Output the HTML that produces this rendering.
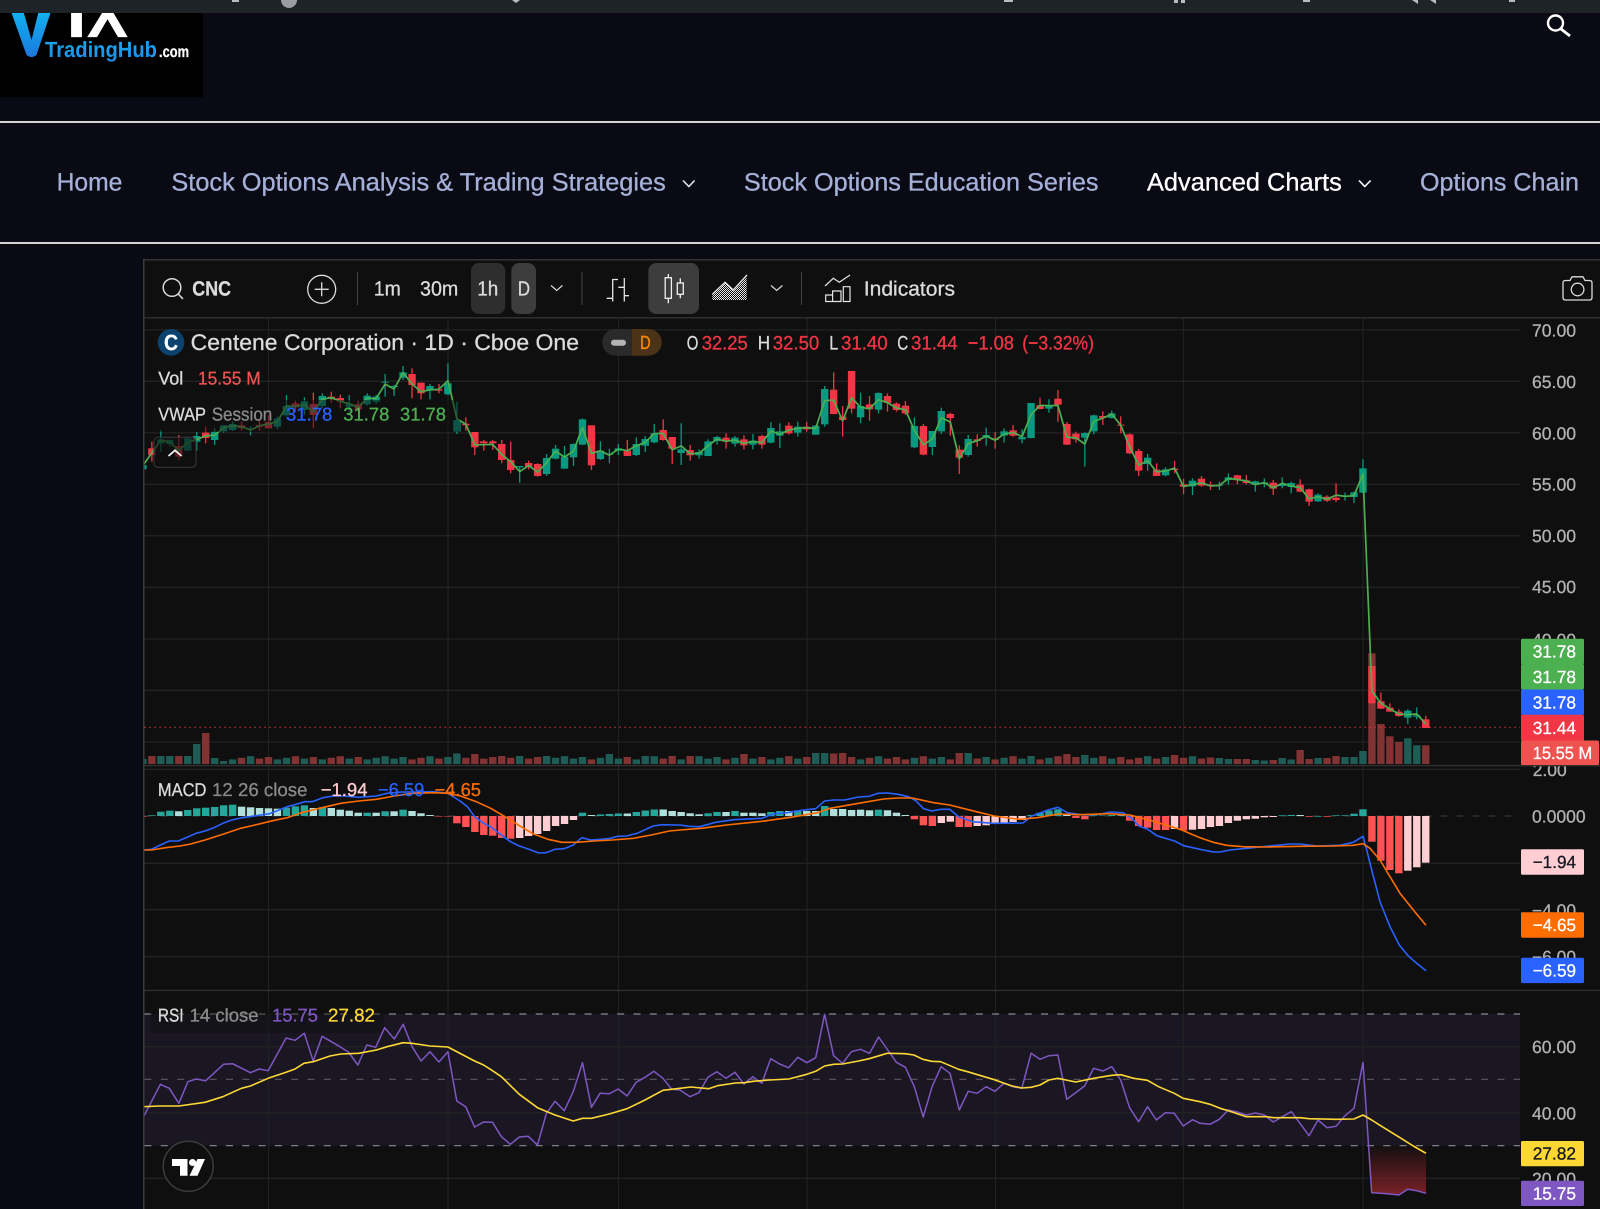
<!DOCTYPE html>
<html><head><meta charset="utf-8"><title>Advanced Charts</title>
<style>
html,body{margin:0;padding:0;background:#090a14;width:1600px;height:1209px;overflow:hidden}
svg{display:block;position:absolute;left:0;top:0;filter:blur(.3px)}
text{font-family:"Liberation Sans",sans-serif;text-rendering:geometricPrecision}
.n{font-size:25px;fill:#a5b0d8}
.t{font-size:20.500px;fill:#dbdbdb}
.a{font-size:17.500px;fill:#b2b2b2}
.l{font-size:17.500px;fill:#fff;font-weight:400}
.o{font-size:19.500px;fill:#f23645}
.w{font-size:19.500px;fill:#dbdbdb}
.v{font-size:18.500px}
</style></head><body>
<svg xmlns="http://www.w3.org/2000/svg" width="1600" height="1209" viewBox="0 0 1600 1209">
<defs>
<linearGradient id="vg" x1="0" y1="0" x2="0" y2="1"><stop offset="0" stop-color="#12b4f0"/><stop offset="1" stop-color="#1b78de"/></linearGradient>
<linearGradient id="tg" x1="0" y1="0" x2="0" y2="1"><stop offset="0" stop-color="#16aef0"/><stop offset="1" stop-color="#1e8ae6"/></linearGradient>
<linearGradient id="rf" x1="0" y1="0" x2="0" y2="1"><stop offset="0" stop-color="#7f2228" stop-opacity=".05"/><stop offset="1" stop-color="#7f2228" stop-opacity=".95"/></linearGradient>
<pattern id="dots" width="2" height="2" patternUnits="userSpaceOnUse"><rect width="1" height="1" fill="#e8e8e8"/><rect x="1" y="1" width="1" height="1" fill="#e8e8e8"/></pattern>
<clipPath id="logoclip"><rect x="0" y="13" width="203" height="84"/></clipPath>
<clipPath id="plotclip"><rect x="144.500" y="318" width="1455.500" height="891"/></clipPath>
</defs>

<rect width="1600" height="1209" fill="#090a14"/>
<!-- top bar -->
<rect width="1600" height="13" fill="#1e2327"/>
<g fill="#b9bdc0">
<rect x="232" y="0" width="7" height="2"/><circle cx="289" cy="0" r="8" fill="#9a9ea2"/><path d="M512 0h8l-4 3z"/>
<rect x="1004" y="0" width="9" height="2"/><rect x="1174" y="0" width="4" height="3"/><rect x="1181" y="0" width="4" height="3"/>
<rect x="1303" y="0" width="7" height="2"/><path d="M1412 0h6v4zM1430 0h6v4z"/><rect x="1509" y="0" width="6" height="2"/>
</g>

<!-- logo -->
<rect x="0" y="13" width="203" height="84" fill="#000"/>
<g clip-path="url(#logoclip)">
<path d="M10.500 10H23L31.500 40 39 10H51.500L36.500 55Q31.500 59 26.500 55Z" fill="url(#vg)"/>
<text x="66.500" y="37" font-size="66" font-weight="700" fill="#fff" textLength="20" lengthAdjust="spacingAndGlyphs">I</text>
<text x="87" y="37" font-size="66" font-weight="700" fill="#fff" textLength="41" lengthAdjust="spacingAndGlyphs">X</text>
</g>
<text x="45" y="57" font-size="22" font-weight="700" fill="url(#tg)" textLength="112" lengthAdjust="spacingAndGlyphs">TradingHub</text>
<text x="159" y="57" font-size="16" font-weight="700" fill="#fff" textLength="30" lengthAdjust="spacingAndGlyphs">.com</text>

<!-- header search -->
<circle cx="1555.500" cy="23" r="7.500" fill="none" stroke="#fff" stroke-width="2.400"/>
<path d="M1561 29L1570 36" stroke="#fff" stroke-width="2.800" fill="none"/>

<!-- rules -->
<rect x="0" y="121" width="1600" height="2" fill="#d4d4d4"/>
<rect x="0" y="242" width="1600" height="2" fill="#d4d4d4"/>

<!-- nav -->
<text class="n" x="56.600" y="190.700" textLength="65.800" lengthAdjust="spacingAndGlyphs">Home</text>
<text class="n" x="171.400" y="190.700" textLength="494.400" lengthAdjust="spacingAndGlyphs">Stock Options Analysis &amp; Trading Strategies</text>
<path d="M683 180.500L688.800 186.500 694.600 180.500" fill="none" stroke="#e0e3f0" stroke-width="1.600"/>
<text class="n" x="743.900" y="190.700" textLength="354.600" lengthAdjust="spacingAndGlyphs">Stock Options Education Series</text>
<text class="n" style="fill:#fff" x="1147" y="190.700" textLength="194.800" lengthAdjust="spacingAndGlyphs">Advanced Charts</text>
<path d="M1359 180.500L1364.800 186.500 1370.600 180.500" fill="none" stroke="#fff" stroke-width="1.600"/>
<text class="n" x="1420" y="190.700" textLength="159" lengthAdjust="spacingAndGlyphs">Options Chain</text>

<!-- chart frame -->
<rect x="143" y="259" width="1457" height="950" fill="#0f0f0f"/>
<rect x="143" y="259" width="1457" height="1.500" fill="#333"/>
<rect x="143" y="259" width="1.500" height="950" fill="#3a3a3a"/>
<rect x="144" y="317" width="1456" height="1.500" fill="#2e2e2e"/>

<!-- toolbar -->
<circle cx="172" cy="287.500" r="8.800" fill="none" stroke="#dbdbdb" stroke-width="1.500"/>
<path d="M178.200 294L183 299" stroke="#dbdbdb" stroke-width="1.600" fill="none"/>
<text class="t" x="192.300" y="295.700" font-weight="700" textLength="38.700" lengthAdjust="spacingAndGlyphs">CNC</text>
<circle cx="321.700" cy="289.300" r="14" fill="none" stroke="#dbdbdb" stroke-width="1.300"/>
<path d="M321.700 282.300V296.300M314.700 289.300H328.700" stroke="#dbdbdb" stroke-width="1.300" fill="none"/>
<rect x="357" y="272" width="1" height="33" fill="#444"/>
<text class="t" x="373.800" y="295.700" textLength="27" lengthAdjust="spacingAndGlyphs">1m</text>
<text class="t" x="420" y="295.700" textLength="38.300" lengthAdjust="spacingAndGlyphs">30m</text>
<rect x="471" y="263" width="34.300" height="51" rx="8" fill="#2e2e2e"/>
<text class="t" x="477.300" y="295.700" textLength="21" lengthAdjust="spacingAndGlyphs">1h</text>
<rect x="511.300" y="263" width="24.700" height="51" rx="8" fill="#3d3d3d"/>
<text class="t" x="517.700" y="295.700" textLength="12.300" lengthAdjust="spacingAndGlyphs">D</text>
<path d="M551 285.500L556.700 290.500 562.400 285.500" fill="none" stroke="#dbdbdb" stroke-width="1.200"/>
<rect x="581.500" y="272" width="1" height="33" fill="#444"/>
<path d="M612.700 279V301.500M606.700 298.300H612.700M612.700 279.500H618M624.300 278V301.500M618.300 287.300H624.300M624.300 295.700H629" fill="none" stroke="#e4e4e4" stroke-width="1.300"/>
<rect x="648.300" y="263" width="50.700" height="51" rx="8" fill="#3d3d3d"/>
<path d="M668.300 274V277.700M668.300 298.300V303.300M680.300 278.300V283M680.300 294.300V298.300" stroke="#f0f0f0" stroke-width="1.300" fill="none"/>
<rect x="665.200" y="277.700" width="6.200" height="20.600" fill="none" stroke="#f0f0f0" stroke-width="1.300"/>
<rect x="677.300" y="283" width="6" height="11.300" fill="none" stroke="#f0f0f0" stroke-width="1.300"/>
<path d="M712.300 300V294.300L725 282.300 733.300 290 746.700 277V300Z" fill="url(#dots)"/>
<path d="M712.300 294.300L725 282.300 733.300 290 747 275" fill="none" stroke="#e8e8e8" stroke-width="1.300"/>
<path d="M771 285.500L776.700 290.500 782.400 285.500" fill="none" stroke="#dbdbdb" stroke-width="1.200"/>
<rect x="801" y="272" width="1" height="33" fill="#444"/>
<path d="M825 286L833.300 278.300 839.300 282.300 850 275" fill="none" stroke="#e4e4e4" stroke-width="1.200"/>
<path d="M825.700 295H832.600V301.500H825.700ZM832.600 291H841V301.500H832.600ZM843.300 286.700H850V301.500H843.300Z" fill="none" stroke="#e4e4e4" stroke-width="1.200"/>
<text class="t" x="863.800" y="295.700" textLength="91.200" lengthAdjust="spacingAndGlyphs">Indicators</text>
<path d="M1565.500 280.500H1570L1572 276.800H1583L1585 280.500H1589.500Q1592 280.500 1592 283V297.500Q1592 300 1589.500 300H1565.500Q1563 300 1563 297.500V283Q1563 280.500 1565.500 280.500Z" fill="none" stroke="#dbdbdb" stroke-width="1.300"/>
<circle cx="1577.600" cy="289.500" r="6.300" fill="none" stroke="#dbdbdb" stroke-width="1.300"/>

<!-- chart drawn by script -->
<g id="plot" clip-path="url(#plotclip)"></g>

<!-- legend -->
<circle cx="171" cy="342.300" r="13.300" fill="#0b436e"/>
<text x="164" y="350" font-size="22" font-weight="700" fill="#fff" textLength="14" lengthAdjust="spacingAndGlyphs">C</text>
<text x="190.700" y="350" font-size="22.500" fill="#dbdbdb" textLength="388.300" lengthAdjust="spacingAndGlyphs">Centene Corporation · 1D · Cboe One</text>
<path d="M631.700 329H615.600A13.300 13.300 0 0 0 615.600 355.700H631.700Z" fill="#2a2a2a"/>
<path d="M631.700 329H648.400A13.300 13.300 0 0 1 648.400 355.700H631.700Z" fill="#4a3317"/>
<rect x="611" y="339.700" width="15" height="6" rx="3" fill="#b4b4b4"/>
<text x="640" y="349" font-size="19" fill="#ff8a00" textLength="10.700" lengthAdjust="spacingAndGlyphs">D</text>

<text class="w" x="686.700" y="349.300" textLength="11.600" lengthAdjust="spacingAndGlyphs">O</text>
<text class="o" x="701.700" y="349.300" textLength="46" lengthAdjust="spacingAndGlyphs">32.25</text>
<text class="w" x="757.700" y="349.300" textLength="12.300" lengthAdjust="spacingAndGlyphs">H</text>
<text class="o" x="772.700" y="349.300" textLength="46.600" lengthAdjust="spacingAndGlyphs">32.50</text>
<text class="w" x="829.300" y="349.300" textLength="9" lengthAdjust="spacingAndGlyphs">L</text>
<text class="o" x="841" y="349.300" textLength="46.700" lengthAdjust="spacingAndGlyphs">31.40</text>
<text class="w" x="897.300" y="349.300" textLength="11" lengthAdjust="spacingAndGlyphs">C</text>
<text class="o" x="911" y="349.300" textLength="46.700" lengthAdjust="spacingAndGlyphs">31.44</text>
<text class="o" x="967.700" y="349.300" textLength="46.300" lengthAdjust="spacingAndGlyphs">−1.08</text>
<text class="o" x="1022.300" y="349.300" textLength="71.700" lengthAdjust="spacingAndGlyphs">(−3.32%)</text>

<text class="v" x="158.300" y="384.300" fill="#dbdbdb" textLength="25" lengthAdjust="spacingAndGlyphs">Vol</text>
<text class="v" x="198" y="384.300" fill="#ef5350" textLength="62.700" lengthAdjust="spacingAndGlyphs">15.55 M</text>

<text class="v" x="158.300" y="420.700" fill="#dbdbdb" textLength="47.700" lengthAdjust="spacingAndGlyphs">VWAP</text>
<text class="v" x="211.700" y="420.700" fill="#8a8a8a" textLength="60.600" lengthAdjust="spacingAndGlyphs">Session</text>
<text class="v" x="286" y="420.700" fill="#2962ff" textLength="46.300" lengthAdjust="spacingAndGlyphs">31.78</text>
<text class="v" x="343.300" y="420.700" fill="#4caf50" textLength="46" lengthAdjust="spacingAndGlyphs">31.78</text>
<text class="v" x="400" y="420.700" fill="#4caf50" textLength="46" lengthAdjust="spacingAndGlyphs">31.78</text>

<rect x="154" y="437.300" width="42" height="30" rx="4" fill="#0f0f0f" fill-opacity=".65" stroke="#3a3a3a" stroke-width="1"/>
<path d="M168.500 456L175 450.300 181.500 456" fill="none" stroke="#f2f2f2" stroke-width="1.800"/>

<text class="v" x="157.900" y="796" fill="#dbdbdb" textLength="48.500" lengthAdjust="spacingAndGlyphs">MACD</text>
<text class="v" x="212" y="796" fill="#8a8a8a" textLength="95.500" lengthAdjust="spacingAndGlyphs">12 26 close</text>
<text class="v" x="320.700" y="796" fill="#ffcdd2" textLength="46.800" lengthAdjust="spacingAndGlyphs">−1.94</text>
<text class="v" x="377.900" y="796" fill="#2962ff" textLength="46.400" lengthAdjust="spacingAndGlyphs">−6.59</text>
<text class="v" x="434.600" y="796" fill="#ff6d00" textLength="46.400" lengthAdjust="spacingAndGlyphs">−4.65</text>

<text class="v" x="157.900" y="1021.700" fill="#dbdbdb" textLength="25.700" lengthAdjust="spacingAndGlyphs">RSI</text>
<text class="v" x="189.600" y="1021.700" fill="#8a8a8a" textLength="69" lengthAdjust="spacingAndGlyphs">14 close</text>
<text class="v" x="272" y="1021.700" fill="#7e57c2" textLength="46" lengthAdjust="spacingAndGlyphs">15.75</text>
<text class="v" x="328" y="1021.700" fill="#fdd835" textLength="47" lengthAdjust="spacingAndGlyphs">27.82</text>

<!-- TV logo -->
<circle cx="188.200" cy="1166.300" r="25" fill="#0f0f0f" stroke="#3c3c3c" stroke-width="1.500"/>
<path d="M172 1159H187.500V1175.700H180V1166H172Z" fill="#fff"/>
<circle cx="192.500" cy="1162.500" r="3.500" fill="#fff"/>
<path d="M197.500 1159H205L197.500 1175.700H189.500Z" fill="#fff"/>

<!-- axis labels -->
<text class="a" x="1532" y="336.300" textLength="44" lengthAdjust="spacingAndGlyphs">70.00</text>
<text class="a" x="1532" y="388" textLength="44" lengthAdjust="spacingAndGlyphs">65.00</text>
<text class="a" x="1532" y="439.500" textLength="44" lengthAdjust="spacingAndGlyphs">60.00</text>
<text class="a" x="1532" y="490.500" textLength="44" lengthAdjust="spacingAndGlyphs">55.00</text>
<text class="a" x="1532" y="542" textLength="44" lengthAdjust="spacingAndGlyphs">50.00</text>
<text class="a" x="1532" y="593" textLength="44" lengthAdjust="spacingAndGlyphs">45.00</text>
<text class="a" x="1532" y="646" textLength="44" lengthAdjust="spacingAndGlyphs">40.00</text>
<text class="a" x="1532.700" y="776" textLength="34" lengthAdjust="spacingAndGlyphs">2.00</text>
<rect x="1520" y="756" width="80" height="9" fill="#0f0f0f"/>
<rect x="1520" y="764.800" width="80" height="1.500" fill="#303030"/>
<text class="a" x="1532" y="822.500" textLength="53.700" lengthAdjust="spacingAndGlyphs">0.0000</text>
<text class="a" x="1532" y="916.500" textLength="44" lengthAdjust="spacingAndGlyphs">−4.00</text>
<text class="a" x="1532" y="963" textLength="44" lengthAdjust="spacingAndGlyphs">−6.00</text>
<text class="a" x="1532" y="1053" textLength="44" lengthAdjust="spacingAndGlyphs">60.00</text>
<text class="a" x="1532" y="1119.700" textLength="44" lengthAdjust="spacingAndGlyphs">40.00</text>
<text class="a" x="1532" y="1185" textLength="44" lengthAdjust="spacingAndGlyphs">20.00</text>

<!-- price labels -->
<rect x="1521" y="638.700" width="63" height="25.500" rx="1.500" fill="#4caf50"/>
<text class="l" x="1532.700" y="657.500" textLength="43.300" lengthAdjust="spacingAndGlyphs">31.78</text>
<rect x="1521" y="664" width="63" height="25.500" rx="1.500" fill="#4caf50"/>
<text class="l" x="1532.700" y="683" textLength="43.300" lengthAdjust="spacingAndGlyphs">31.78</text>
<rect x="1521" y="689.500" width="63" height="25.500" rx="1.500" fill="#2962ff"/>
<text class="l" x="1532.700" y="708.500" textLength="43.300" lengthAdjust="spacingAndGlyphs">31.78</text>
<rect x="1521" y="714.700" width="63" height="26" rx="1.500" fill="#f23645"/>
<text class="l" x="1532.700" y="733.800" textLength="43.300" lengthAdjust="spacingAndGlyphs">31.44</text>
<rect x="1521" y="740.500" width="78" height="24.500" rx="1.500" fill="#ef5350"/>
<text class="l" x="1532.700" y="759" textLength="59.500" lengthAdjust="spacingAndGlyphs">15.55 M</text>

<rect x="1521" y="849.300" width="63" height="25.400" rx="1.500" fill="#ffcdd2"/>
<text class="l" style="fill:#131722" x="1532.700" y="868" textLength="43.300" lengthAdjust="spacingAndGlyphs">−1.94</text>
<rect x="1521" y="912.300" width="63" height="25.400" rx="1.500" fill="#ff6d00"/>
<text class="l" x="1532.700" y="931" textLength="43.300" lengthAdjust="spacingAndGlyphs">−4.65</text>
<rect x="1521" y="957.700" width="63" height="25.400" rx="1.500" fill="#2962ff"/>
<text class="l" x="1532.700" y="976.500" textLength="43.300" lengthAdjust="spacingAndGlyphs">−6.59</text>
<rect x="1521" y="1141" width="63" height="25.300" rx="1.500" fill="#fdd835"/>
<text class="l" style="fill:#131722" x="1532.700" y="1159.700" textLength="43.300" lengthAdjust="spacingAndGlyphs">27.82</text>
<rect x="1521" y="1180.700" width="63" height="25.300" rx="1.500" fill="#7e57c2"/>
<text class="l" x="1532.700" y="1199.500" textLength="43.300" lengthAdjust="spacingAndGlyphs">15.75</text>
</svg>
<script>
(function(){
var X=function(i){return 142.9+8.971*i};
var A=[[315,328,305,330,1],[265,285,245,305,0],[238,250,210,275,1],[240,252,238,260,1],[258,290,225,300,0],[235,272,235,272,1],[228,245,215,272,1],[218,234,200,250,0],[215,240,205,255,1],[196,214,196,218,1],[192,210,185,213,1],[196,204,185,212,0],[205,209,198,226,1],[195,200,180,212,0],[186,205,165,205,0],[176,200,170,208,1],[138,166,105,170,1],[130,142,122,155,0],[124,150,112,165,1],[132,165,98,205,0],[108,138,100,145,1],[110,116,95,128,0],[114,124,104,145,0],[133,140,105,155,1],[133,148,122,155,0],[107,133,100,137,1],[110,125,105,132,1],[65,68,42,110,1],[78,80,75,108,1],[37,53,18,60,1],[42,75,25,115,0],[68,100,68,118,0],[78,92,72,118,1],[88,92,72,100,0],[70,103,10,105,1],[180,215,125,222,1],[191,196,172,212,0],[216,262,216,285,0],[244,250,240,272,0],[244,250,240,270,0],[252,300,240,310,0],[300,330,245,340,0],[318,322,318,368,1],
[309,320,302,328,0],[312,348,310,350,0],[294,342,282,348,1],[266,296,255,298,1],[290,326,258,326,1],[252,292,250,318,1],[178,254,175,255,1],[196,316,196,330,0],[272,297,244,300,1],[281,284,266,310,1],[265,272,252,285,1],[272,288,240,288,0],[252,285,232,288,1],[237,257,228,276,1],[220,247,192,250,1],[210,240,178,242,0],[231,266,231,312,0],[268,279,190,315,1],[270,286,255,302,0],[276,286,268,296,1],[244,288,238,288,1],[231,243,228,254,1],[233,245,220,266,0],[233,251,228,260,1],[238,256,226,268,0],[242,254,222,268,1],[228,254,224,266,0],[204,248,186,250,1],[214,227,190,264,1],[197,220,187,224,0],[200,218,185,230,1],[200,208,185,215,0],[197,224,195,225,1],[87,193,78,200,1],[89,162,37,163,0],[170,180,138,230,0],[33,146,33,160,0],[138,172,98,190,1],[133,148,108,182,0],[99,149,97,160,1],[108,129,100,155,0],[131,150,127,155,0],[137,160,123,165,0],[198,262,172,264,1]];
var B=[[168,254,162,256,0],[183,231,183,255,1],[123,184,113,192,1],[132,144,128,197,0],[239,263,226,312,0],[207,255,195,260,1],[208,213,193,230,0],[195,200,173,227,1],[205,210,186,236,0],[184,197,175,218,1],[181,197,165,200,0],[201,208,178,220,1],[99,204,99,205,1],[106,117,83,118,0],[105,116,88,128,1],[86,104,60,155,0],[162,224,156,225,0],[191,208,185,218,0],[189,203,187,290,1],[136,184,134,193,1],[138,144,124,165,0],[130,144,122,146,1],[164,167,139,190,0],[193,250,190,252,0],[243,302,237,318,0],[263,282,252,302,1],[299,318,280,318,0],[298,316,292,319,1],[296,300,273,310,0],[343,350,327,372,0],[332,349,325,375,1],[326,347,318,350,0],[344,348,335,360,0],[344,347,335,360,1],[322,330,310,344,1],[316,330,314,342,0],[331,339,315,343,0],[334,344,332,365,1],[337,342,325,352,1],[338,356,330,375,0],[342,348,322,355,1],[339,351,335,370,1],[344,365,328,366,0],[358,395,356,408,0],[374,394,370,396,1],[380,392,376,396,0],[383,390,340,396,0],[377,380,368,392,1],[367,381,365,399,1],[295,368,268,370,1]];
var C=[[678,790,678,790,0],[784,806,757,806,0],[803,815,790,815,0],[815,828,808,830,0],[812,833,808,852,1],[826,830,802,838,1],[838,864,828,864,0]];
function conv(a,o){return a.map(function(d){return [o+d[0]/3,o+d[1]/3,o+d[2]/3,o+d[3]/3,d[4]]})}
var D=conv(A,360).concat(conv(B,370),conv(C,440));
var s='';
function R(x,y,w,h,f,e){return '<rect x="'+x.toFixed(2)+'" y="'+y.toFixed(2)+'" width="'+w.toFixed(2)+'" height="'+h.toFixed(2)+'" fill="'+f+'" '+(e||'')+'/>'}
function L(x1,y1,x2,y2,c,e){return '<line x1="'+x1+'" y1="'+y1+'" x2="'+x2+'" y2="'+y2+'" stroke="'+c+'" '+(e||'')+'/>'}
function P(p,c,w){return '<polyline fill="none" stroke-linejoin="round" stroke="'+c+'" stroke-width="'+w+'" points="'+p.map(function(q){return q[0].toFixed(1)+','+q[1].toFixed(1)}).join(' ')+'"/>'}

s+=R(144.5,1014,1375.5,131.7,'#1a1723');
[268.5,448,618.5,807,995.5,1183.5,1363].forEach(function(x){s+=L(x,318.5,x,1209,'#212121','stroke-width="1.200"')});
[329.9,381.3,432.8,484.3,535.7,587.3,639,690.3,742,769.3,863.3,909.7,956.7,1046.7,1112.7,1178.3].forEach(function(y){s+=L(144.5,y,1520,y,'#222','stroke-width="1.300"')});
var ov={0:5,1:8,2:8,3:8,4:8,5:8,6:20,7:31,8:6,9:3,35:10.6,37:10,40:8,42:8,45:8,52:10,56:8,59:8,61:8,67:10,75:11,76:11,77:10.500,78:11,91:11,92:11,99:8,103:10,105:9,115:9,
121:5,122:5,123:5,124:4,125:3.500,126:4,127:6,128:4.500,119:6.500,120:6,129:14,130:5,131:6,132:6,133:8,134:7,135:7,136:13,137:110.7,138:40,139:27.7,140:22,141:25.7,142:18.700,143:18.700};
D.forEach(function(d,i){var h=ov[i]!==undefined?ov[i]:4.600+((i*37)%5)*.8;s+=R(X(i)-3.7,764-h,7.4,h,d[4]?'#1f5c55':'#813232')});
D.forEach(function(d,i){var x=X(i),c=d[4]?'#089981':'#f23645';
 s+=R(x-.65,d[2],1.3,Math.max(d[3]-d[2],.1),c);
 s+=R(x-3.7,d[0],7.4,Math.max(d[1]-d[0],1),c)});
s+=P(D.map(function(d,i){var cl=d[4]?d[0]:d[1];return [X(i),(d[2]+d[3]+cl)/3]}),'#4caf50',1.7);
s+=R(150,400,310,32,'#0f0f0f','fill-opacity=".5"');
s+=L(144.5,727.3,1520,727.3,'#f23645','stroke-width="1.200" stroke-dasharray="1.200 3.800"');
s+=R(144,764.8,1456,1.500,'#303030');
s+=R(144,989.8,1456,1.300,'#303030');
s+=L(144.5,816,1520,816,'#3c3c3c','stroke-width="1" stroke-dasharray="7 9"');
var H='r-.7 t.7 t4.3 t5.3 l4.7 t6 t7.7 t8.3 t9 t10.7 t11.3 l9.3 l8.7 l8 l7.7 l7.3 t8.3 t9.7 t10.7 l8 t8.7 l8 l6.3 l5.3 l3.3 t3.3 l3.3 t4.7 l4.7 t6.3 l5 l2.7 l1 r-.5 r-.5 r-7.3 r-11 r-16 r-19 r-19.7 r-22 r-22.7 p-22 p-20 p-18 p-15 p-10 p-8 p-4 t3.3 l1 t1.5 t2 t2.5 l2.5 t4 t5.5 t6.5 l6.5 l5 l4 l2.7 l1.7 t2.7 t4 l4 t5 l3.3 l3.3 l2.7 t4 t5 l5 t5.7 l5 l5 t10 l7 l7 l6 l6.3 l5.7 t6.3 l5.7 l3.3 l1 r-3.3 r-9.3 r-10 p-7 p-5.7 r-11 r-11 p-10 p-9.3 p-8 p-6.7 p-6 p-4 t1 t3.3 t5.5 t6.7 l1.7 r-2 r-3.3 t.5 t.5 t1 l.5 r-4.7 r-10 r-11.7 r-14 r-14 p-13 r-14.5 p-13.7 p-13 p-11 p-10 p-7 p-4.7 p-3.3 p-2.7 p-1.3 p-1 t.7 t1 l1 r-.7 t-.7 r-.7 t.7 t.7 t2.3 t6.7 r-25.7 r-44.7 r-54 r-57.3 p-54.7 p-51.3 p-46.7'.split(' ');
var HC={t:'#26a69a',l:'#b2dfdb',r:'#ff5252',p:'#ffcdd2'};
H.forEach(function(e,i){var c=HC[e[0]],v=parseFloat(e.slice(1)),x=X(i)-3.7;
 s+=v>=0?R(x,816-v,7.4,v,c):R(x,816,7.4,-v,c)});
function pts(a,fx,ox,oy){var o=[];for(var i=0;i<a.length;i+=2)o.push([ox+a[i]/fx,oy+a[i+1]/3]);return o}
function join(a5,a6,a4){
 return pts(a5,2.8,130,760).filter(function(p){return p[0]<677}).concat(
  pts(a6,2.8,680,760).filter(function(p){return p[0]<1198}),
  pts(a4,3,1200,770));
}
var mb=join([38,270,60,268,85,255,110,243,135,243,160,232,185,220,210,213,235,203,260,190,285,180,310,174,335,170,360,166,390,161,412,152,440,140,465,133,490,125,510,125,540,113,570,108,600,108,640,112,690,108,720,100,760,96,800,96,850,95,890,100,920,120,945,140,965,170,990,190,1010,200,1040,225,1065,245,1090,258,1115,267,1145,279,1165,278,1190,268,1215,266,1240,256,1265,233,1290,240,1320,238,1345,235,1365,229,1390,228,1420,220,1465,198,1490,194,1530,195],
 [0,195,25,199,55,200,100,187,150,179,230,175,260,162,300,158,340,151,380,146,405,123,430,120,460,120,500,111,530,109,555,100,580,99,610,103,640,110,660,122,682,146,705,153,730,148,755,148,780,170,820,185,875,190,960,189,985,168,1030,150,1058,142,1085,158,1130,165,1175,163,1205,156,1240,158,1265,175,1285,198,1310,208,1335,227,1385,243,1410,257,1480,276],
 [0,238,40,246,60,246,90,240,140,235,200,229,270,222,300,222,350,228,420,226,460,217,489,199,500,240,515,300,540,395,570,470,598,525,625,558,650,580,678,602]);
var mo=join([38,270,60,270,100,263,140,258,170,252,210,240,260,223,310,205,350,195,400,182,440,173,480,158,530,145,590,130,640,123,690,118,740,108,790,100,850,98,890,100,925,108,970,125,1010,145,1050,170,1090,197,1130,222,1170,238,1210,247,1250,247,1300,243,1350,240,1410,235,1460,225,1510,213],
 [0,210,60,205,130,195,230,184,310,172,385,158,420,145,500,130,570,117,610,114,650,114,710,128,755,135,830,155,880,168,950,178,1000,173,1060,162,1120,164,1200,161,1260,165,1320,182,1400,208,1470,238],
 [0,203,40,217,80,226,130,230,200,231,300,229,400,228,460,226,489,221,510,235,540,270,570,320,600,370,640,420,678,466]);
s+=P(mb,'#2962ff',1.6)+P(mo,'#ff6d00',1.6);
[1014,1079.3,1145.7].forEach(function(y,i){s+=L(144.5,y,1520,y,i==1?'#5a5862':'#8a8a90','stroke-width="1.200" stroke-dasharray="7 9.300"')});
s+=R(150,1004,234,29,'#0f0f0f','fill-opacity=".45" rx="3"');
var rp=pts([506,1127,515,1268,542,1270,570,1272,597,1275,623,1258,650,1262,678,1270],3,1200,770);
s+='<polygon fill="url(#rf)" points="'+rp.map(function(q){return q[0].toFixed(1)+','+q[1].toFixed(1)}).join(' ')+' 1426,1146"/>';
var rr=join([38,1070,85,973,110,985,137,1030,162,965,185,957,212,962,262,913,287,911,337,938,362,927,387,932,437,834,462,841,488,820,513,903,538,829,588,860,612,877,638,915,663,855,688,862,713,803,740,837,765,793,790,860,815,903,840,875,865,906,890,875,915,1023,940,1040,965,1101,990,1086,1015,1087,1040,1130,1065,1153,1090,1131,1115,1129,1141,1155,1166,1060,1190,1024,1216,1052,1241,995,1267,908,1292,1042,1316,1000,1342,1001,1367,987,1392,1008,1417,967,1442,952,1467,934,1492,955,1517,988],
 [0,990,28,1010,53,998,78,952,103,935,129,955,154,937,179,972,204,950,229,970,254,896,279,912,304,923,330,892,355,908,380,893,405,763,430,887,455,910,480,875,505,868,531,880,556,831,606,907,631,922,656,980,681,1071,706,980,731,920,756,940,782,1050,807,994,832,1000,857,980,882,994,907,970,932,980,957,985,983,880,1008,898,1033,887,1058,885,1083,1018,1133,978,1158,925,1184,933,1209,920,1234,960,1259,1043,1284,1085,1309,1040,1334,1080,1359,1058,1384,1060,1409,1098,1435,1079],
 [0,1060,30,1063,58,1048,85,1020,112,1026,139,1035,166,1029,193,1035,220,1056,247,1040,274,1025,300,1060,327,1097,354,1050,381,1073,408,1069,435,1037,462,1015,489,877,515,1268,542,1270,570,1272,597,1275,623,1258,650,1262,678,1270]);
var ry=join([38,1040,80,1038,137,1038,210,1027,260,1010,312,985,337,978,387,955,437,937,462,927,487,910,513,905,560,888,590,882,640,880,690,870,720,860,765,848,790,850,840,858,890,861,965,903,990,915,1015,932,1040,950,1090,1003,1141,1043,1190,1065,1241,1083,1267,1075,1292,1075,1342,1062,1392,1046,1442,1020,1492,991],
 [0,985,30,981,80,986,105,977,155,969,180,968,205,964,250,960,305,957,355,943,380,934,405,918,430,913,455,912,500,903,530,896,580,880,630,881,655,885,680,898,705,904,730,905,780,928,805,935,880,959,930,978,957,984,983,982,1008,975,1033,960,1058,955,1108,966,1158,955,1209,946,1234,944,1270,955,1309,961,1340,980,1384,1000,1409,1015],
 [0,995,30,1003,60,1015,85,1022,139,1040,200,1040,220,1043,300,1043,327,1046,408,1048,462,1047,489,1035,515,1050,540,1066,600,1103,640,1128,678,1150]);
s+=P(rr,'#7e57c2',1.5)+P(ry,'#fdd835',1.6);
document.getElementById('plot').innerHTML=s;
// thicken text weight slightly to match the reference rendering
document.querySelectorAll('text').forEach(function(t){var f=getComputedStyle(t).fill;if(f.indexOf('url')<0){t.style.stroke=f;t.style.strokeWidth='.3'}});
})();
</script>
</body></html>
